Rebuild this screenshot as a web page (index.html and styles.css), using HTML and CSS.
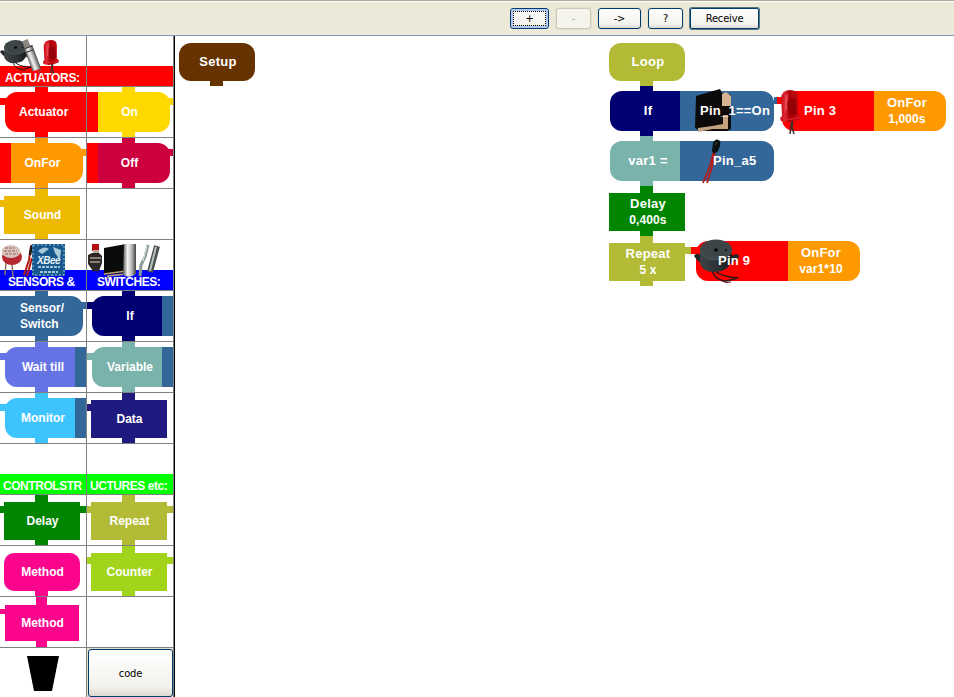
FILE: index.html
```html
<!DOCTYPE html>
<html lang="en">
<head>
<meta charset="utf-8">
<title>Block editor</title>
<link rel="stylesheet" href="styles.css">
</head>
<body>
<svg class="defs" width="0" height="0" aria-hidden="true">
  <defs>
    <linearGradient id="metal" x1="0" x2="1"><stop offset="0" stop-color="#555"/><stop offset=".35" stop-color="#f4f4f0"/><stop offset=".65" stop-color="#bbb"/><stop offset="1" stop-color="#444"/></linearGradient>
    <linearGradient id="led" x1="0" x2="1"><stop offset="0" stop-color="#c8101c"/><stop offset=".25" stop-color="#dc2530"/><stop offset=".45" stop-color="#b00008"/><stop offset="1" stop-color="#c80c14"/></linearGradient>
    <linearGradient id="rubber" x1="0" x2="1"><stop offset="0" stop-color="#3c4448"/><stop offset=".6" stop-color="#2b3033"/><stop offset="1" stop-color="#15181a"/></linearGradient>
    <symbol id="buzzer" viewBox="0 0 48 46">
      <path d="M18 31C20 39 28 44 36 41Q42 40 44 38M20 31C26 37 34 38 44 39" fill="none" stroke="#281818" stroke-width="1.4"/>
      <path d="M26 41L32 43.500L37 43" fill="none" stroke="#701010" stroke-width="1.2"/>
      <path d="M0 17Q2 13 6 16L9 22L7 24L3 21ZM36 17L43 15Q46 17 44 20L36 25Z" fill="#202528"/>
      <path d="M6 10L6 25Q10 34 22 33Q35 32 37 22L38 9Z" fill="url(#rubber)"/>
      <ellipse cx="22" cy="10.500" rx="16" ry="10" fill="#3d4549"/>
      <path d="M7 12Q10 21 22 20.500Q35 20 38 11" fill="none" stroke="#596267" stroke-width=".8"/>
      <ellipse cx="22" cy="11" rx="2" ry="1.800" fill="#050505"/><circle cx="32" cy="11" r="1" fill="#111"/>
    </symbol>
    <symbol id="led-lamp" viewBox="0 0 21 45">
      <path d="M12 29L10 44M13 29L12 37L14 44" fill="none" stroke="#3a302c" stroke-width="1.500"/>
      <path d="M1 8Q2 0 10 0Q18 0 18 7L18 24Q22 26 20 29Q10 34 1 31L0 28L2 26Z" fill="url(#led)"/>
      <path d="M7 13Q11 5 16 10L17 23Q14 28 9 24Z" fill="#8d0007" opacity=".8"/>
      <path d="M5 9Q5 4 8 4L7 19L4.500 22Z" fill="#ee6c72" opacity=".55"/>
      <path d="M2 28Q10 31 20 27" fill="none" stroke="#e02a32" stroke-width="1"/>
    </symbol>
  </defs>
</svg>

<header class="toolbar">
  <button class="btn focus w39">+</button>
  <button class="btn off w35">-</button>
  <button class="btn w43">-&gt;</button>
  <button class="btn w35">?</button>
  <button class="btn wide">Receive</button>
</header>

<main class="workspace">
  <aside class="palette">
    <div class="cell head red"><span>ACTUATORS:</span>
      <svg class="art" viewBox="0 36 86 50">
        <use href="#buzzer" x="0" y="39.500" width="34" height="33"/>
        <path d="M33 62L40 73M36 63L41 71" stroke="#6a6060" fill="none"/>
        <g transform="rotate(-21 31 56)"><rect x="27" y="46" width="9" height="25" fill="url(#metal)"/><rect x="28" y="39" width="6" height="8" fill="#8a8780"/><path d="M27 47H36M27 51H36" stroke="#3c3c38"/></g>
        <use href="#led-lamp" x="42.500" y="40" width="17" height="35"/>
      </svg>
    </div>
    <div class="cell head red"></div>

    <div class="cell c-red"><i class="pin"></i><i class="in"></i><div class="block openr">Actuator</div></div>
    <div class="cell c-yellow"><i class="pin"></i><i class="out"></i><div class="block value"><b></b><span>On</span></div></div>

    <div class="cell c-orange"><i class="pin"></i><i class="out"></i><div class="block value"><b></b><span>OnFor</span></div></div>
    <div class="cell c-crimson"><i class="pin"></i><i class="out"></i><div class="block value"><b></b><span>Off</span></div></div>

    <div class="cell c-gold"><i class="pin"></i><i class="in"></i><div class="block box">Sound</div></div>
    <div class="cell"></div>

    <div class="cell head blue"><span>SENSORS &amp;</span>
      <svg class="art" viewBox="0 240 86 50">
        <path d="M6 263L5 275M12 264L13 277" stroke="#8a7462" stroke-width="1.500"/>
        <ellipse cx="12" cy="257" rx="10" ry="8" fill="#b82830"/><ellipse cx="11" cy="251.500" rx="9.500" ry="6.500" fill="#d8c6be"/>
        <path d="M4 251H17M5 254H18M5 248H15" stroke="#9b6257" stroke-width="1.200" stroke-dasharray="3 1"/>
        <path d="M31 246L29 260L24 275M32 258L27 276" stroke="#b01810" stroke-width="2" fill="none"/><path d="M32 245L30 255" stroke="#151515" stroke-width="2.500"/>
        <rect x="32" y="244" width="33" height="32" fill="#17598e"/>
        <path d="M33 245H64V275H33Z" fill="none" stroke="#9abfd0" stroke-width="1" stroke-dasharray="2 2"/>
        <path d="M38 251Q44 245 49 249L42 254ZM53 247L61 250L60 260L55 253Z" fill="#a9ccd8"/>
        <text x="37" y="264" class="chip">XBee</text><path d="M38 267H60M40 272H58" stroke="#9fc7dc" stroke-width="2" stroke-dasharray="3 1"/>
      </svg>
    </div>
    <div class="cell head blue"><span>SWITCHES:</span>
      <svg class="art" viewBox="87 240 86 50">
        <path d="M93 266V272M98 266V273" stroke="#222"/><rect x="92" y="244" width="7" height="7" fill="#b81012"/><rect x="93" y="250" width="6" height="6" fill="#bba99b"/>
        <path d="M88 255L92 253H99L102 256V263L99 271H93L88 264Z" fill="#2c2825"/><path d="M90 258H101M90 262H100" stroke="#a69a91" stroke-width="1.300"/>
        <path d="M104 248L126 244V273L104 275Z" fill="#0b0b0b"/><path d="M104 274L126 271V274L108 276V279" stroke="#c3a27e" fill="none" stroke-width="1.500"/>
        <path d="M124 244H136V274Q130 279 123 275Z" fill="url(#metal)"/>
        <path d="M148 245L145 257L141 265L140 276" stroke="#899b98" fill="none" stroke-width="3"/><path d="M147 246L143 261" stroke="#e3eeeb"/>
        <path d="M157 246L150 272" stroke="#4b504c" stroke-width="6"/><path d="M156 247L150 271" stroke="#bcc3bd" stroke-width="2"/>
      </svg>
    </div>

    <div class="cell c-steel"><i class="pin"></i><i class="out"></i><div class="block sensor"><span>Sensor/<br>Switch</span></div></div>
    <div class="cell c-navy"><i class="pin"></i><i class="in"></i><div class="block slot"><span>If</span><b></b></div></div>

    <div class="cell c-violet"><i class="pin"></i><i class="in"></i><div class="block slot"><span>Wait till</span><b></b></div></div>
    <div class="cell c-teal"><i class="pin"></i><i class="in"></i><div class="block slot"><span>Variable</span><b></b></div></div>

    <div class="cell c-sky"><i class="pin"></i><i class="in"></i><div class="block slot"><span>Monitor</span><b></b></div></div>
    <div class="cell c-indigo"><i class="pin"></i><i class="in"></i><div class="block box">Data</div></div>

    <div class="cell head green"><span>CONTROLSTR</span></div>
    <div class="cell head green"><span>UCTURES etc:</span></div>

    <div class="cell c-green"><i class="pin"></i><i class="in"></i><i class="out"></i><div class="block box">Delay</div></div>
    <div class="cell c-olive"><i class="pin"></i><i class="in"></i><i class="out"></i><div class="block box">Repeat</div></div>

    <div class="cell c-pink"><i class="pin lower"></i><div class="block box round">Method</div></div>
    <div class="cell c-lime"><i class="pin"></i><i class="in"></i><i class="out"></i><div class="block box">Counter</div></div>

    <div class="cell c-pink small"><i class="pin"></i><i class="in"></i><div class="block box">Method</div></div>
    <div class="cell"></div>

    <div class="cell bin"><svg width="32" height="35" viewBox="0 0 32 35"><path d="M0 0H32L25 35H7Z"/></svg></div>
    <div class="cell run"><button class="btn code">code</button></div>
  </aside>

  <section class="canvas">
    <div class="stack setup">
      <div class="node round c-brown">Setup</div>
      <i class="link c-brown"></i>
    </div>

    <div class="stack loop">
      <div class="node round c-olive">Loop</div>
      <i class="link c-olive"></i><i class="link c-navy"></i>
      <div class="line">
        <div class="cmd c-navy">If</div>
        <div class="arg c-steel">
          <svg class="over" width="40" height="46" viewBox="694 88 40 46">
            <path d="M696 96L720 89L722 93L731 95V129L727 131H701L695 128Z" fill="#0c0b09"/>
            <path d="M722 94L726 92L731 96V106H722Z" fill="#d3b391"/>
            <path d="M723 115H728V129H713L698 132V128L712 126L723 124ZM710 130V133" fill="#c5a27f"/>
          </svg>
          <span>Pin_1==On</span>
        </div>
        <i class="joint c-steel"></i><i class="joint five c-red"></i>
        <div class="dev c-red">
          <svg class="over led" width="21" height="45"><use href="#led-lamp" width="21" height="45"/></svg>
          <span>Pin 3</span>
        </div>
        <div class="act c-orange"><span>OnFor</span><span class="tight">1,000s</span></div>
      </div>
      <i class="link c-navy"></i><i class="link c-teal"></i>
      <div class="line">
        <div class="cmd c-teal">var1 =</div>
        <div class="arg c-steel alt">
          <svg class="over" width="24" height="46" viewBox="700 139 24 46">
            <path d="M714 151L710 166L703 183M715 151L712 167L707 183" fill="none" stroke="#b71c12" stroke-width="1.800"/>
            <path d="M713 143Q716 137 720 141Q721 145 718 151L714 154L712 151Z" fill="#07100c"/>
            <path d="M715 145L717 142" stroke="#465149"/>
          </svg>
          <span>Pin_a5</span>
        </div>
      </div>
      <i class="link c-teal"></i><i class="link c-green long"></i>
      <div class="node c-green"><span>Delay</span><span class="tight">0,400s</span></div>
      <i class="link c-green"></i><i class="link c-olive long"></i>
      <div class="line last">
        <div class="node c-olive"><span>Repeat</span><span class="tight">5 x</span></div>
        <i class="joint six c-olive"></i><i class="joint five c-red"></i>
        <div class="dev c-red nine">
          <svg class="over buzz" width="48" height="46"><use href="#buzzer" width="48" height="46"/></svg>
          <span>Pin 9</span>
        </div>
        <div class="act c-orange"><span>OnFor</span><span class="tight">var1*10</span></div>
      </div>
      <i class="link c-olive"></i>
    </div>
  </section>
</main>
</body>
</html>
```

FILE: styles.css
```css
* { box-sizing: border-box; }
body { margin: 0; width: 954px; height: 697px; overflow: hidden; background: #fff; font: bold 12px/16px "Liberation Sans", sans-serif; color: #fff; }
.defs { position: absolute; }
i, b { display: block; }

.c-red { --c: #ff0000; }
.c-yellow { --c: #ffd800; }
.c-orange { --c: #ff9900; }
.c-crimson { --c: #cc003d; }
.c-gold { --c: #edb900; }
.c-steel { --c: #336699; }
.c-navy { --c: #000073; }
.c-violet { --c: #6673e5; }
.c-teal { --c: #7ab3ab; }
.c-sky { --c: #3dc4ff; }
.c-indigo { --c: #1f1a80; }
.c-green { --c: #008500; }
.c-olive { --c: #b3ba36; }
.c-pink { --c: #fa058c; }
.c-lime { --c: #a1d41a; }
.c-brown { --c: #663300; }

.toolbar { display: flex; align-items: center; gap: 7px; height: 36px; padding: 0 0 0 510px; background: #ece9d8; border-top: 1px solid #aca899; border-bottom: 1px solid #7f9db9; box-shadow: inset 0 1px #fff; }
.btn { height: 21px; padding: 0; border: 1px solid #003c74; border-radius: 3px; background: linear-gradient(#fff, #f3f2ed 80%, #dcd8cd); color: #000; font: 11px/13px "DejaVu Sans Condensed", "Noto Sans", sans-serif; letter-spacing: -.15px; box-shadow: 0 0 0 1px #e4e0ce; }
.w39 { width: 39px; }
.w35 { width: 35px; }
.w43 { width: 43px; }
.btn.focus { outline: 1px dotted #000; outline-offset: -4px; box-shadow: inset 0 0 0 2px #b4c8f0; }
.btn.off { color: #a1a192; border-color: #c9c7ba; background: #f5f4ea; }
.btn.wide { width: 69px; box-shadow: 0 0 0 1px #55767c; border-radius: 2px; }

.workspace { display: flex; height: 661px; }
.palette { display: grid; grid-template-columns: 87px 87px; grid-auto-rows: 51px; width: 175px; height: 661px; overflow: hidden; border-right: 1px solid #000; flex: none; }
.cell { position: relative; border-right: 1px solid #808080; border-bottom: 1px solid #808080; overflow: hidden; }
.head { padding: 34px 0 0 3px; white-space: nowrap; letter-spacing: -.45px; }
.head span { position: relative; z-index: 1; }
.head.red { background: linear-gradient(#fff 30px, #f00 30px); padding-left: 5px; letter-spacing: -.35px; }
.head.blue { background: linear-gradient(#fff 30px, #00f 30px); padding-left: 8px; }
.head.blue + .blue { padding-left: 10px; }
.head.green { background: linear-gradient(#fff 30px, #0f0 30px); }
.art { position: absolute; left: 0; top: 0; width: 86px; height: 50px; }
.chip { font: italic bold 10px "Liberation Sans", sans-serif; fill: #e5f3f8; }

.pin, .in, .out { position: absolute; background: var(--c); }
.pin { left: 35px; width: 13px; top: 0; height: 50px; }
.pin.lower { top: 25px; }
.in { left: 0; width: 8px; top: 11px; height: 7px; }
.out { right: 0; width: 8px; top: 11px; height: 7px; }
.block { position: relative; display: flex; align-items: center; height: 40px; margin-top: 5px; background: var(--c); text-align: left; }
.openr { margin-left: 5px; padding-left: 14px; border-radius: 12px 0 0 12px; }
.value { margin-right: 3px; border-radius: 0 12px 12px 0; }
.value b { width: 11px; height: 40px; background: #f00; }
.value span { width: 63px; text-align: center; }
.sensor { margin-right: 3px; padding-left: 20px; border-radius: 0 12px 12px 0; }
.slot { margin-left: 5px; border-radius: 12px 0 0 12px; }
.slot span { width: 76px; text-align: center; }
.slot b { position: absolute; right: 0; width: 11px; height: 40px; background: #369; }
.box { width: 76px; height: 38px; margin: 7px 0 0 4px; padding-left: 1px; justify-content: center; }
.box.round { border-radius: 10px; }
.small .box { width: 74px; height: 36px; margin: 8px 0 0 5px; }
.small .pin { left: 36px; width: 11px; }
.small .in { top: 12px; height: 5px; }
.bin { display: flex; padding: 8px 0 0 27px; }
.run { background: #ece9d8; padding: 1px 0 0 1px; }
.code { display: block; width: 85px; height: 48px; }

.canvas { display: flex; align-items: flex-start; flex: 1; padding: 7px 0 0 4px; font-size: 13px; letter-spacing: .25px; }
.stack { display: flex; flex-direction: column; align-items: flex-start; }
.setup { width: 430px; }
.node { display: flex; flex-direction: column; align-items: center; justify-content: center; width: 76px; height: 38px; padding-left: 2px; background: var(--c); }
.node.round { border-radius: 12px; }
.link { width: 13px; height: 5px; margin-left: 31px; background: var(--c); }
.link.long { height: 7px; }
.line { display: flex; height: 40px; margin-left: 1px; }
.cmd { display: flex; align-items: center; justify-content: center; width: 70px; padding-left: 6px; border-radius: 12px 0 0 12px; background: var(--c); }
.arg { position: relative; display: flex; align-items: center; width: 94px; padding-left: 20px; border-radius: 0 12px 12px 0; background: var(--c); }
.arg.alt { padding-left: 33px; }
.arg span, .dev span { position: relative; }
.over { position: absolute; left: 14px; top: -3px; }
.alt .over { left: 20px; top: -2px; }
.over.led { left: -2px; top: -1px; }
.over.buzz { left: -2px; top: -2px; }
.joint { width: 3px; height: 7px; margin-top: 6px; background: var(--c); }
.joint.six { width: 6px; }
.joint.five { width: 8px; margin-right: -3px; }
.dev { position: relative; display: flex; align-items: center; width: 92px; padding-left: 22px; border-radius: 12px 0 0 12px; background: var(--c); }
.act { display: flex; flex-direction: column; align-items: center; justify-content: center; width: 72px; padding-right: 6px; border-radius: 0 12px 12px 0; background: var(--c); }
.tight { font-size: 12px; letter-spacing: .1px; }
.last { height: 38px; margin-left: 0; }
.last .dev, .last .act { height: 40px; margin-top: -2px; }
.last .joint { margin-top: 4px; }
```
